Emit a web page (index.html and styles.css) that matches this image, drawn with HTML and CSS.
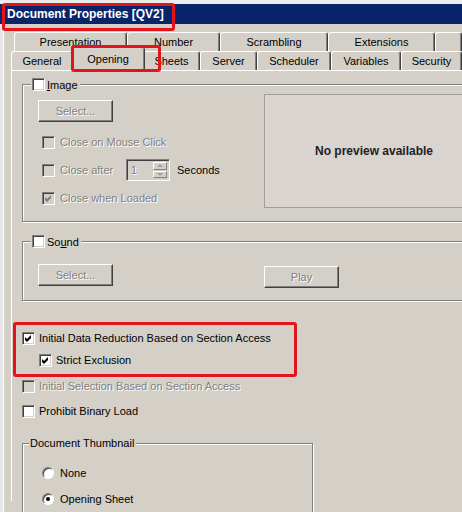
FILE: index.html
```html
<!DOCTYPE html>
<html lang="en">
<head>
<meta charset="UTF-8">
<title>Document Properties</title>
<link rel="stylesheet" href="styles.css">
</head>
<body>

<div class="window">
  <div class="topstrip"></div>
  <div class="caption">Document Properties [QV2]</div>

  <div class="client">
    <div class="tabrow back">
      <div class="tab t-pres">Presentation</div>
      <div class="tab t-num">Number</div>
      <div class="tab t-scr">Scrambling</div>
      <div class="tab t-ext">Extensions</div>
      <div class="tab t-fill"></div>
    </div>
    <div class="tabrow front">
      <div class="tab t-gen">General</div>
      <div class="tab active">Opening</div>
      <div class="tab t-sheets">Sheets</div>
      <div class="tab t-server">Server</div>
      <div class="tab t-sched">Scheduler</div>
      <div class="tab t-vars">Variables</div>
      <div class="tab t-fill">Security</div>
    </div>

    <div class="panel">
      <fieldset class="group g-image">
        <legend><span class="leg"><span class="cb"></span><span><u>I</u>mage</span></span></legend>
        <div class="gbody">
          <div class="lcol">
            <button class="btn b-top">Select...</button>
            <div class="row dis"><span class="cb off"></span>Close on Mouse Click</div>
            <div class="row dis">
              <span class="cb off"></span><span class="lbl-after">Close after</span>
              <span class="spin">
                <span class="spin-val">1</span>
                <span class="spin-btns"><span class="sb"><i class="up"></i></span><span class="sb"><i class="dn"></i></span></span>
              </span>
              <span class="secs">Seconds</span>
            </div>
            <div class="row dis">
              <span class="cb off"><svg width="11" height="11" viewBox="0 0 11 11"><polygon points="2,4 4,6 8,2 8,5 4,9 2,7" fill="#808080"/></svg></span>Close when Loaded
            </div>
          </div>
          <div class="preview">No preview available</div>
        </div>
      </fieldset>

      <fieldset class="group g-sound">
        <legend><span class="leg"><span class="cb"></span><span>So<u>u</u>nd</span></span></legend>
        <div class="gbody">
          <div class="lcol">
            <button class="btn b-sel">Select...</button>
          </div>
          <button class="btn b-play">Play</button>
        </div>
      </fieldset>

      <div class="redbox">
        <div class="crow"><span class="cb"><svg width="11" height="11" viewBox="0 0 11 11"><polygon points="2,4 4,6 8,2 8,5 4,9 2,7" fill="#000"/></svg></span>Initial Data Reduction Based on Section Access</div>
        <div class="crow sub"><span class="cb"><svg width="11" height="11" viewBox="0 0 11 11"><polygon points="2,4 4,6 8,2 8,5 4,9 2,7" fill="#000"/></svg></span>Strict Exclusion</div>
      </div>

      <div class="crow plain dis first"><span class="cb off"></span>Initial Selection Based on Section Access</div>
      <div class="crow plain second"><span class="cb"></span>Prohibit Binary Load</div>

      <fieldset class="group g-thumb">
        <legend class="tleg">Document Thumbnail</legend>
        <div class="rrow r-first"><span class="radio"></span>None</div>
        <div class="rrow"><span class="radio"><span class="dot"></span></span>Opening Sheet</div>
      </fieldset>
    </div>
  </div>

  <div class="mark mark-title"></div>
  <div class="mark mark-tab"></div>
</div>

</body>
</html>
```

FILE: styles.css
```css
html,body{margin:0;background:#d4d0c8;font-family:"Liberation Sans",Arial,sans-serif;font-size:11px;color:#000}
.window{position:relative;width:462px;height:512px;overflow:hidden;background:#d4d0c8}
.topstrip{height:4px;background:#ececec}
.caption{height:20px;line-height:20px;background:#0a246a;color:#fff;font-weight:bold;font-size:12px;padding-left:7px;white-space:nowrap}
.client{height:488px;box-sizing:border-box;padding:8px 0 0 11px;box-shadow:inset 3px 0 #e6e6e8,inset 4px 0 #fff}

/* tabs */
.tabrow{display:flex;height:19px}
.tabrow.back{padding-left:3px}
.tab{flex:none;box-sizing:border-box;height:19px;line-height:18px;text-align:center;white-space:nowrap;overflow:hidden;background:#d4d0c8;border-top:1px solid #fff;border-left:1px solid #fff;border-right:1px solid #404040;box-shadow:inset -1px 0 #808080;border-radius:3px 3px 0 0}
.t-pres{width:113px}
.t-num{width:93px}
.t-scr{width:108px}
.t-ext{width:107px}
.t-gen{width:62px}
.t-sheets{width:57px}
.t-server{width:57px}
.t-sched{width:74px}
.t-vars{width:70px}
.t-fill{flex:1;min-width:0}
.tab.active{position:relative;z-index:1;width:74px;height:24px;line-height:22px;margin:-4px -2px 0}

.panel{height:430px;border-top:1px solid #fff;border-left:1px solid #fff}

/* group boxes */
.group{margin:0 0 0 10px;padding:0;min-width:0;border:1px solid #808080;box-shadow:inset 1px 1px #fff,1px 1px #fff}
.group legend{padding:0 2px 0 1px;margin-left:8px;background:#d4d0c8}
.leg{display:flex;align-items:center;gap:2px;height:13px}
.g-image{margin-top:7px;width:460px;padding-bottom:9px}
.g-sound{margin-top:13px;width:460px;padding-bottom:12px}
.g-thumb{margin-top:18px;width:289px;height:80px}
.g-thumb .tleg{margin-left:6px;height:13px;line-height:13px}

.gbody{display:flex;align-items:flex-start}
.lcol{flex:none;width:241px;box-sizing:border-box;padding-left:15px}
.row{display:flex;align-items:center;gap:5px;height:28px;padding-left:4px}
.b-top{margin:9px 0 6px}
.b-sel{margin-top:16px}
.b-play{margin-top:18px}
.lbl-after{width:61px}
.secs{margin-left:2px;color:#000;text-shadow:none}

.preview{flex:none;margin-top:3px;width:220px;height:114px;box-sizing:border-box;border:1px solid #a19d99;background:#dad4d0;display:flex;align-items:center;justify-content:center;font-weight:bold;font-size:12px;color:#222}

.dis{color:#808080;text-shadow:1px 1px 0 #fff}

/* controls */
.cb{flex:none;display:flex;align-items:center;justify-content:center;width:13px;height:13px;box-sizing:border-box;background:#fff;border:1px solid;border-color:#808080 #fff #fff #808080;box-shadow:inset 1px 1px #404040,inset -1px -1px #d4d0c8}
.cb.off{background:#d4d0c8}
.cb svg{display:block}

.btn{display:block;width:75px;height:22px;box-sizing:border-box;padding:0;background:#d4d0c8;border:1px solid;border-color:#fff #404040 #404040 #fff;box-shadow:inset -1px -1px #808080;font:inherit;color:#808080;text-shadow:1px 1px 0 #fff}

.spin{flex:none;display:flex;width:44px;height:22px;box-sizing:border-box;border:1px solid;border-color:#808080 #fff #fff #808080;box-shadow:inset 1px 1px #404040,inset -1px -1px #d4d0c8}
.spin-val{flex:1;padding-left:4px;line-height:20px}
.spin-btns{display:flex;flex-direction:column;gap:1px;width:16px;padding:2px 2px 2px 0;box-sizing:border-box}
.sb{flex:1;display:flex;align-items:center;justify-content:center;border:1px solid;border-color:#fff #808080 #808080 #fff}
.sb i{display:block;width:0;height:0;border-left:3px solid transparent;border-right:3px solid transparent}
.sb .up{border-bottom:3px solid #a0a0a0}
.sb .dn{border-top:3px solid #a0a0a0}

/* section access rows */
.redbox{margin:21px 0 0 1px;width:284px;box-sizing:border-box;padding:2px 0 3px 6px;border:3px solid #e3151b;border-radius:3px}
.crow{display:flex;align-items:center;gap:4px;height:22px}
.crow.sub{padding-left:17px}
.crow.plain{height:16px;margin-left:10px}
.crow.first{margin-top:1px}
.crow.second{margin-top:9px}

.rrow{display:flex;align-items:center;gap:6px;height:26px;padding-left:19px}
.r-first{margin-top:10px}
.radio{flex:none;display:flex;align-items:center;justify-content:center;width:12px;height:12px;box-sizing:border-box;border-radius:50%;background:#fff;border:1px solid;border-color:#808080 #fff #fff #808080;box-shadow:inset 1px 1px #404040}
.dot{width:4px;height:4px;border-radius:50%;background:#000}

/* annotation marks */
.mark{position:absolute;box-sizing:border-box;border:3px solid #e3151b;border-radius:3px}
.mark-title{left:2px;top:3px;width:173px;height:28px}
.mark-tab{left:71px;top:45px;width:90px;height:27px;z-index:2}
```
